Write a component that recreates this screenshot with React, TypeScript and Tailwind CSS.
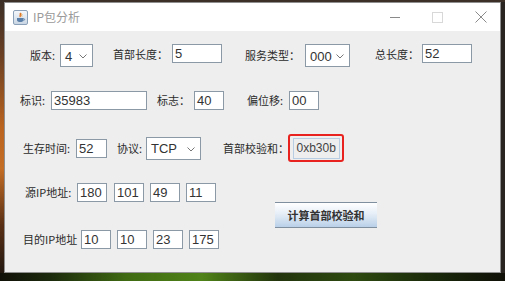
import React from "react";

const cjk = "font-['Noto_Sans_CJK_SC','Noto_Sans',sans-serif]";
const sans = "font-['Liberation_Sans','Noto_Sans_CJK_SC',sans-serif]";

function Label({ text, w }: { text: string; w: number }) {
  return (
    <span
      className={`${cjk} text-[11px] leading-none text-[#2b2b2b] whitespace-nowrap shrink-0`}
      style={{ width: w }}
    >
      {text}
    </span>
  );
}

function Field({ value, w }: { value: string; w: number }) {
  return (
    <div
      className={`${sans} h-[19px] shrink-0 bg-white border border-[#8b98a5] pl-[2px] text-[13px] leading-[17px] text-[#333333]`}
      style={{ width: w }}
    >
      {value}
    </div>
  );
}

function Combo({ value, w }: { value: string; w: number }) {
  return (
    <div
      className={`${sans} h-[23px] shrink-0 bg-white border border-[#8b98a5] pl-[4px] pr-[5px] flex items-center justify-between text-[13px] text-[#333333]`}
      style={{ width: w }}
    >
      <span className="mt-[2px]">{value}</span>
      <svg width="8" height="5" viewBox="0 0 8 5" className="mt-[2px]">
        <path d="M0.5 0.5 L4 4 L7.5 0.5" fill="none" stroke="#777" strokeWidth="1" />
      </svg>
    </div>
  );
}

function Gap({ w }: { w: number }) {
  return <div className="shrink-0" style={{ width: w }} />;
}

export default function App() {
  return (
    <div className="w-[505px] h-[281px] overflow-hidden flex flex-col bg-[linear-gradient(180deg,#3b2f27_0%,#6b4023_20%,#b9631f_45%,#c46d25_60%,#5a3015_80%,#1a1410_100%)]">
      <div className="flex pt-[2px]">
        <div className="ml-[4px] w-[497px] h-[271px] border border-[#8f8f8f] flex flex-col bg-[#eeeeee]">
          {/* title bar */}
          <div className="h-[28px] bg-white flex items-center shrink-0">
            <div className="ml-[8px] w-[15px] h-[15px] rounded-[2px] border border-[#8aa0b8] bg-[linear-gradient(180deg,#f4f7fb,#c9d6e4)] flex items-center justify-center">
              <svg width="11" height="11" viewBox="0 0 11 11">
                <path d="M5 1 C6.5 2.5 4 3.5 5.5 5" fill="none" stroke="#e0701c" strokeWidth="1.4" />
                <path d="M6.5 1.5 C7.5 2.5 6 3.5 7 4.5" fill="none" stroke="#e89a3c" strokeWidth="1" />
                <path d="M2 6 H8.5 V8 C8.5 9.5 7 10 5.2 10 C3.5 10 2 9.5 2 8 Z" fill="#5a7fa8" />
                <path d="M8.5 6.6 C10 6.6 10 8.4 8.5 8.4" fill="none" stroke="#5a7fa8" strokeWidth="0.9" />
              </svg>
            </div>
            <span className={`${cjk} ml-[5px] text-[12px] text-[#9a9a9a]`}>IP包分析</span>
            <div className="ml-auto flex items-center">
              <div className="w-[10px] h-px bg-[#8a8a8a]" />
              <div className="ml-[32px] w-[11px] h-[11px] border border-[#d8d8d8]" />
              <svg width="12" height="12" viewBox="0 0 12 12" className="ml-[32px] mr-[13px]">
                <path d="M0.5 0.5 L11.5 11.5 M11.5 0.5 L0.5 11.5" stroke="#8a8a8a" strokeWidth="1" />
              </svg>
            </div>
          </div>

          {/* content */}
          <div className="flex flex-col">
            {/* row 1 */}
            <div className="mt-[13px] h-[23px] flex items-start">
              <div className="h-[23px] flex items-center pl-[25px]">
                <Label text="版本:" w={30} />
              </div>
              <Combo value="4" w={33} />
              <Gap w={20} />
              <div className="h-[20px] flex items-center">
                <Label text="首部长度：" w={59} />
              </div>
              <Field value="5" w={50} />
              <Gap w={23} />
              <div className="h-[22px] flex items-center">
                <Label text="服务类型：" w={60} />
              </div>
              <Combo value="000" w={45} />
              <Gap w={25} />
              <div className="h-[20px] flex items-center">
                <Label text="总长度：" w={47} />
              </div>
              <Field value="52" w={50} />
            </div>

            {/* row 2 */}
            <div className="mt-[23px] h-[20px] flex items-center pl-[15px]">
              <Label text="标识:" w={31} />
              <Field value="35983" w={96} />
              <Gap w={10} />
              <Label text="标志：" w={37} />
              <Field value="40" w={30} />
              <Gap w={23} />
              <Label text="偏位移:" w={42} />
              <Field value="00" w={30} />
            </div>

            {/* row 3 */}
            <div className="mt-[24px] h-[28px] flex items-center pl-[18px]">
              <Label text="生存时间:" w={53} />
              <Field value="52" w={31} />
              <Gap w={10} />
              <Label text="协议:" w={29} />
              <Combo value="TCP" w={55} />
              <Gap w={22} />
              <Label text="首部校验和：" w={65} />
              <div className="w-[56px] h-[28px] shrink-0 border-2 border-[#e8231f] rounded-[3px] flex items-center justify-center">
                <div className={`${sans} w-[47px] h-[21px] border border-[#b9cde2] bg-[#eeeeee] pl-[3px] text-[12px] leading-[19px] text-[#444444]`}>
                  0xb30b
                </div>
              </div>
            </div>

            {/* row 4 */}
            <div className="mt-[21px] h-[19px] flex items-center pl-[20px]">
              <Label text="源IP地址:" w={52} />
              <Field value="180" w={30} />
              <Gap w={7} />
              <Field value="101" w={30} />
              <Gap w={6} />
              <Field value="49" w={30} />
              <Gap w={6} />
              <Field value="11" w={30} />
            </div>

            {/* button row */}
            <div className="h-[26px] flex pl-[270px]">
              <button
                className={`${cjk} w-[102px] h-[26px] border-t border-b border-[#7f8fa0] bg-[linear-gradient(180deg,#ffffff_0%,#e6eef7_45%,#b9d0e8_100%)] text-[11px] font-bold text-[#333333]`}
              >
                计算首部校验和
              </button>
            </div>

            {/* row 5 */}
            <div className="mt-[2px] h-[19px] flex items-center pl-[18px]">
              <Label text="目的IP地址" w={58} />
              <Field value="10" w={30} />
              <Gap w={6} />
              <Field value="10" w={30} />
              <Gap w={6} />
              <Field value="23" w={30} />
              <Gap w={6} />
              <Field value="175" w={30} />
            </div>
          </div>
        </div>
        <div className="w-[4px] h-[271px] bg-[#2a2420]" />
      </div>
      <div className="flex-1 bg-[linear-gradient(90deg,#101008_0%,#1c2a0c_10%,#3f6a12_25%,#4f8218_40%,#22340c_55%,#2e4a10_70%,#1a2a0a_85%,#101008_100%)]" />
    </div>
  );
}
